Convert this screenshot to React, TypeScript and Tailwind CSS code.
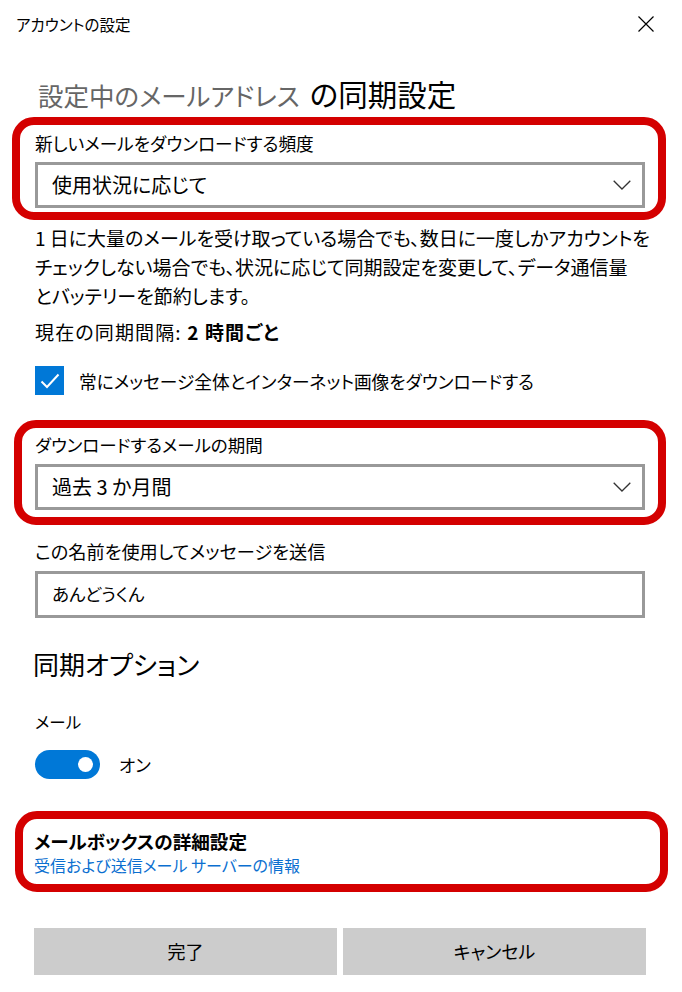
export default function App() {
  return (
    <div className="w-[682px] h-[992px] bg-white text-black [font-family:'Noto_Sans_CJK_JP',sans-serif] [font-feature-settings:'palt'] overflow-hidden">
      <div className="h-[48px] flex items-center justify-between pl-[16px] pr-[28px]">
        <span className="text-[15.5px] leading-[20px]">アカウントの設定</span>
        <svg width="16" height="16" viewBox="0 0 16 16">
          <path d="M0.5 0.5 L15.5 15.5 M15.5 0.5 L0.5 15.5" stroke="#000" strokeWidth="1.2" fill="none" />
        </svg>
      </div>

      <div className="mt-[27px] pl-[38px] h-[36px] leading-[36px] flex items-baseline">
        <span className="text-[25.5px] text-[#666]">設定中のメールアドレス</span>
        <span className="text-[29.5px] ml-[10px]">の同期設定</span>
      </div>

      <div className="mt-[6px] ml-[12px] w-[654px] border-[8px] border-[#d40000] rounded-[22px] pt-[7px] pb-[4px] pl-[15px] pr-[13px]">
        <div className="text-[17.7px] leading-[22px]">新しいメールをダウンロードする頻度</div>
        <Dropdown value="使用状況に応じて" />
      </div>

      <div className="mt-[3px] pl-[35px] text-[19px] leading-[29px] whitespace-nowrap">
        1 日に大量のメールを受け取っている場合でも、数日に一度しかアカウントを
        <br />
        チェックしない場合でも、状況に応じて同期設定を変更して、データ通信量
        <br />
        とバッテリーを節約します。
      </div>

      <div className="mt-[7px] pl-[35px] text-[19px] leading-[29px] tracking-[0.06em]">
        現在の同期間隔: <span className="font-bold">2 時間ごと</span>
      </div>

      <div className="mt-[20px] pl-[35px] flex items-center gap-[15px] h-[29px]">
        <div className="w-[29px] h-[29px] bg-[#0078d7] flex items-center justify-center">
          <svg width="20" height="16" viewBox="0 0 20 16">
            <path d="M1.5 8.5 L7 14 L18.5 1.5" stroke="#fff" strokeWidth="2" fill="none" />
          </svg>
        </div>
        <span className="text-[17.7px] leading-[22px]">常にメッセージ全体とインターネット画像をダウンロードする</span>
      </div>

      <div className="mt-[25px] ml-[14px] w-[652px] border-[8px] border-[#d40000] rounded-[22px] pt-[6px] pb-[7px] pl-[13px] pr-[13px]">
        <div className="text-[17.5px] leading-[22px]">ダウンロードするメールの期間</div>
        <Dropdown value="過去 3 か月間" />
      </div>

      <div className="mt-[15px] pl-[35px] pr-[37px]">
        <div className="text-[18.2px] leading-[22px]">この名前を使用してメッセージを送信</div>
        <div className="mt-[9px] h-[47px] border-[3px] border-[#999] flex items-center pl-[14px] text-[17.6px]">
          あんどうくん
        </div>
      </div>

      <div className="mt-[28px] pl-[33px] text-[26px] leading-[36px]">同期オプション</div>

      <div className="mt-[29px] pl-[35px] text-[16.5px] leading-[22px]">メール</div>

      <div className="mt-[17px] pl-[35px] flex items-center gap-[19px]">
        <div className="w-[65px] h-[29px] rounded-full bg-[#0078d7] flex items-center justify-end pr-[7px]">
          <div className="w-[15px] h-[15px] rounded-full bg-white" />
        </div>
        <span className="text-[17.5px] leading-[24px]">オン</span>
      </div>

      <div className="mt-[32px] ml-[15px] w-[653px] border-[8px] border-[#d40000] rounded-[22px] pt-[10px] pb-[7px] pl-[11px]">
        <div className="text-[18.6px] leading-[24px] font-bold">メールボックスの詳細設定</div>
        <div className="text-[16px] leading-[24px] text-[#0b6fd0]">受信および送信メール サーバーの情報</div>
      </div>

      <div className="mt-[36px] pl-[34px] flex gap-[6px]">
        <button className="w-[303px] h-[47px] bg-[#cccccc] text-[18px] flex items-center justify-center">完了</button>
        <button className="w-[303px] h-[47px] bg-[#cccccc] text-[18px] flex items-center justify-center">キャンセル</button>
      </div>
    </div>
  );
}

function Dropdown({ value }: { value: string }) {
  return (
    <div className="mt-[8px] h-[46px] border-[3px] border-[#999] flex items-center justify-between pl-[14px] pr-[11px]">
      <span className="text-[20px] leading-[24px]">{value}</span>
      <svg width="18" height="10" viewBox="0 0 18 10">
        <path d="M0.7 0.7 L9 9 L17.3 0.7" stroke="#333" strokeWidth="1.3" fill="none" />
      </svg>
    </div>
  );
}
